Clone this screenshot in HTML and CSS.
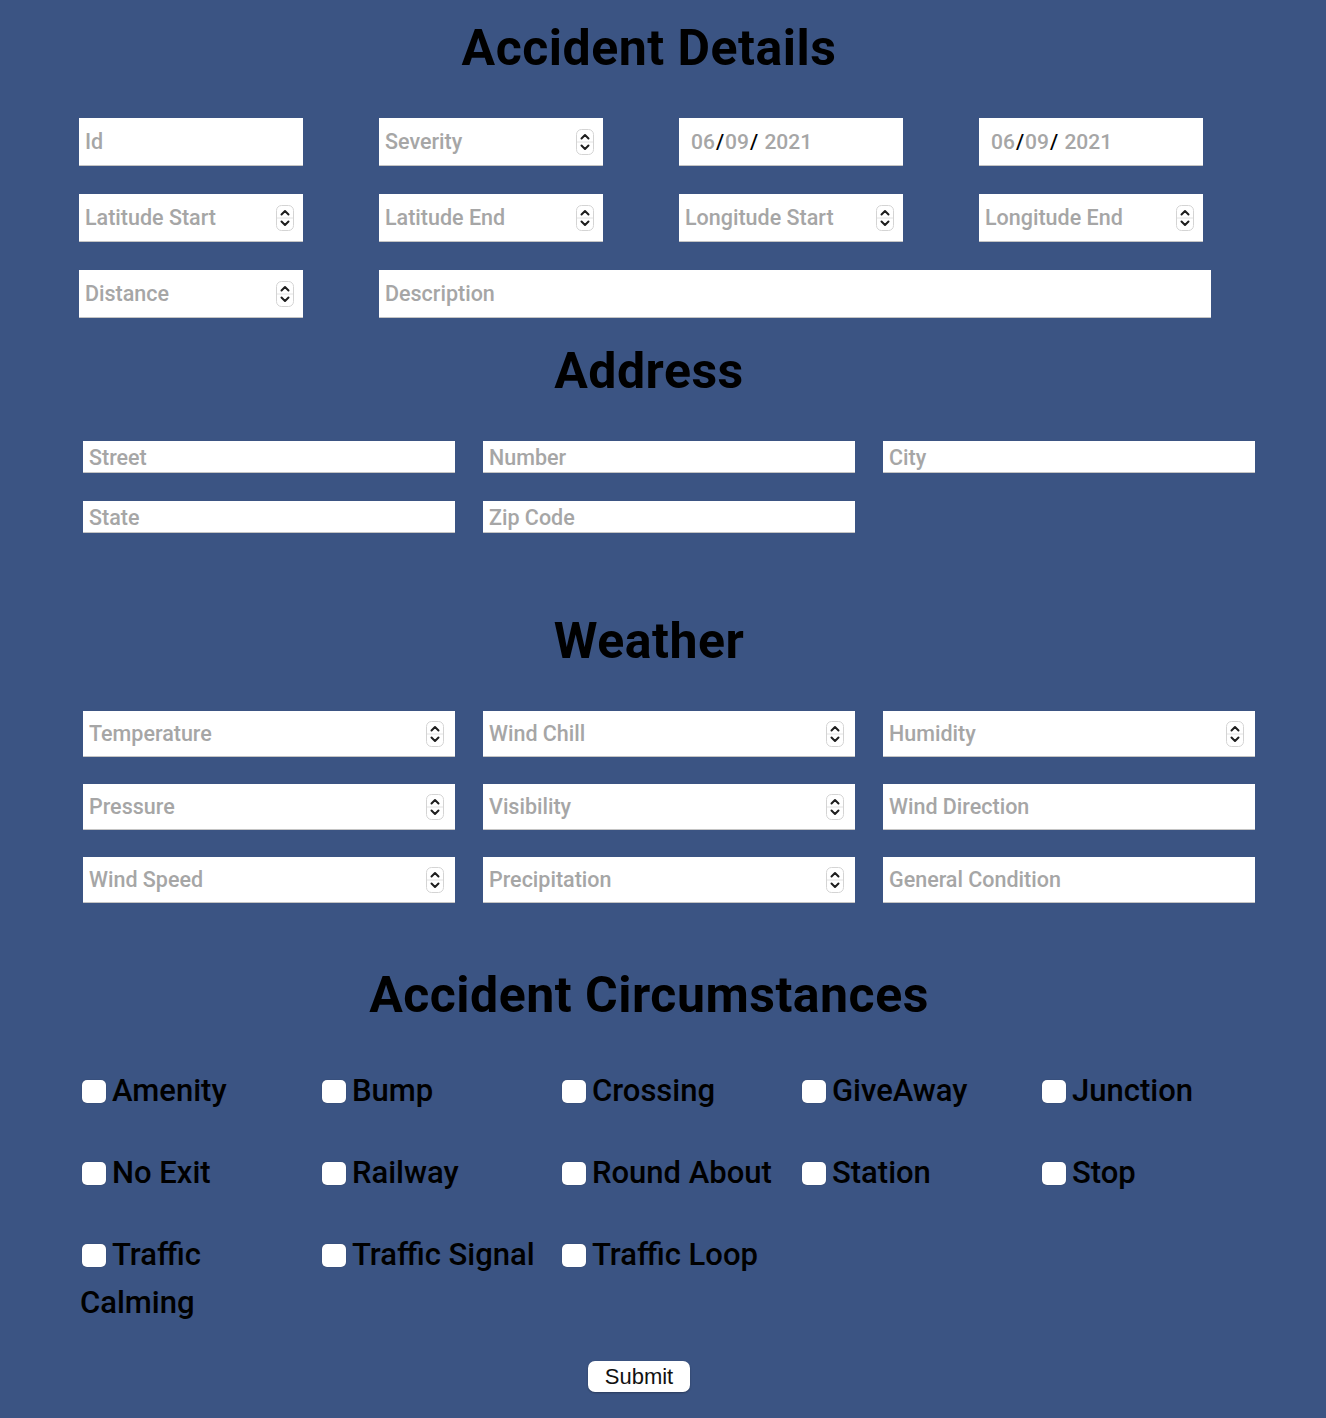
FILE: index.html
```html
<!DOCTYPE html>
<html lang="en">
<head>
    <meta charset="UTF-8">
    <meta name="viewport" content="width=device-width, initial-scale=1.0">
    <title>Accident Form</title>
    <link rel="stylesheet" href="styles.css">
</head>
<body>
    <svg class="defs" width="0" height="0">
        <symbol id="spin" viewBox="0 0 18 26">
            <rect x="0.5" y="0.5" width="17" height="25" rx="5" fill="#fff" stroke="#d4d4d4"/>
            <line x1="1" y1="13" x2="17" y2="13" stroke="#e2e2e2"/>
            <path d="M5.5 9.5 L9 6 L12.5 9.5" fill="none" stroke="#1e1e1e" stroke-width="2" stroke-linecap="round" stroke-linejoin="round"/>
            <path d="M5.5 16.5 L9 20 L12.5 16.5" fill="none" stroke="#1e1e1e" stroke-width="2" stroke-linecap="round" stroke-linejoin="round"/>
        </symbol>
    </svg>

    <form class="form">
        <h1 class="title">Accident Details</h1>
        <div class="details">
            <div class="field"><input type="text" placeholder="Id"></div>
            <div class="field"><input type="number" placeholder="Severity"><svg class="spin"><use href="#spin"/></svg></div>
            <div class="field date"><span>06</span><b>/</b><span>09</span><b>/</b><span>&nbsp;2021</span></div>
            <div class="field date"><span>06</span><b>/</b><span>09</span><b>/</b><span>&nbsp;2021</span></div>
            <div class="field"><input type="number" placeholder="Latitude Start"><svg class="spin"><use href="#spin"/></svg></div>
            <div class="field"><input type="number" placeholder="Latitude End"><svg class="spin"><use href="#spin"/></svg></div>
            <div class="field"><input type="number" placeholder="Longitude Start"><svg class="spin"><use href="#spin"/></svg></div>
            <div class="field"><input type="number" placeholder="Longitude End"><svg class="spin"><use href="#spin"/></svg></div>
            <div class="field"><input type="number" placeholder="Distance"><svg class="spin"><use href="#spin"/></svg></div>
            <div class="field description"><input type="text" placeholder="Description"></div>
        </div>

        <h1 class="title">Address</h1>
        <div class="address">
            <div class="field"><input type="text" placeholder="Street"></div>
            <div class="field"><input type="text" placeholder="Number"></div>
            <div class="field"><input type="text" placeholder="City"></div>
            <div class="field"><input type="text" placeholder="State"></div>
            <div class="field"><input type="text" placeholder="Zip Code"></div>
        </div>

        <h1 class="title">Weather</h1>
        <div class="weather">
            <div class="field"><input type="number" placeholder="Temperature"><svg class="spin"><use href="#spin"/></svg></div>
            <div class="field"><input type="number" placeholder="Wind Chill"><svg class="spin"><use href="#spin"/></svg></div>
            <div class="field"><input type="number" placeholder="Humidity"><svg class="spin"><use href="#spin"/></svg></div>
            <div class="field"><input type="number" placeholder="Pressure"><svg class="spin"><use href="#spin"/></svg></div>
            <div class="field"><input type="number" placeholder="Visibility"><svg class="spin"><use href="#spin"/></svg></div>
            <div class="field"><input type="text" placeholder="Wind Direction"></div>
            <div class="field"><input type="number" placeholder="Wind Speed"><svg class="spin"><use href="#spin"/></svg></div>
            <div class="field"><input type="number" placeholder="Precipitation"><svg class="spin"><use href="#spin"/></svg></div>
            <div class="field"><input type="text" placeholder="General Condition"></div>
        </div>

        <h1 class="title">Accident Circumstances</h1>
        <div class="checks">
            <label><input type="checkbox">Amenity</label>
            <label><input type="checkbox">Bump</label>
            <label><input type="checkbox">Crossing</label>
            <label><input type="checkbox">GiveAway</label>
            <label><input type="checkbox">Junction</label>
            <label><input type="checkbox">No Exit</label>
            <label><input type="checkbox">Railway</label>
            <label><input type="checkbox">Round About</label>
            <label><input type="checkbox">Station</label>
            <label><input type="checkbox">Stop</label>
            <label><input type="checkbox">Traffic Calming</label>
            <label><input type="checkbox">Traffic Signal</label>
            <label><input type="checkbox">Traffic Loop</label>
        </div>

        <div class="actions">
            <button type="submit">Submit</button>
        </div>
    </form>
</body>
</html>
```

FILE: styles.css
```css
body {
    margin: 0;
    background-color: #3b5483;
    font-family: Roboto, "Liberation Sans", sans-serif;
}
.defs {
    position: absolute;
}
.form {
    width: 1298px;
    padding-top: 20px;
    padding-bottom: 26px;
}
.title {
    margin: 0;
    font-size: 50px;
    line-height: 56px;
    font-weight: 700;
    letter-spacing: 0.5px;
    text-align: center;
    color: #000;
}
.field {
    display: flex;
    align-items: center;
    box-sizing: border-box;
    background-color: white;
    border-bottom: 1px solid #c4c4c4;
    padding: 0 9px 0 6px;
}
.field input {
    flex: 1;
    min-width: 0;
    border: none;
    outline: none;
    background: transparent;
    padding: 0;
    font-family: Roboto, "Liberation Sans", sans-serif;
    font-size: 21.5px;
    font-weight: 500;
    color: #333;
}
.field input::placeholder {
    color: #a6a6a6;
}
.field input::-webkit-inner-spin-button,
.field input::-webkit-outer-spin-button {
    -webkit-appearance: none;
    margin: 0;
}
.spin {
    flex: none;
    width: 18px;
    height: 26px;
}
.date {
    padding-left: 12px;
    font-size: 21px;
    font-weight: 500;
    color: #a6a6a6;
}
.date b {
    color: #000;
    font-weight: 500;
    margin: 0 1px;
}
.details {
    display: grid;
    grid-template-columns: repeat(4, 224px);
    grid-auto-rows: 48px;
    gap: 28px 76px;
    margin: 42px 0 25px 79px;
}
.description {
    grid-column: 2 / 5;
    width: 832px;
}
.address {
    display: grid;
    grid-template-columns: repeat(3, 372px);
    grid-auto-rows: 32px;
    gap: 28px 28px;
    margin: 42px 0 80px 83px;
}
.address .field input {
    padding-top: 2px;
}
.weather {
    display: grid;
    grid-template-columns: repeat(3, 372px);
    grid-auto-rows: 46px;
    gap: 27px 28px;
    margin: 42px 0 64px 83px;
}
.weather .field {
    padding-right: 11px;
}
.checks {
    display: grid;
    grid-template-columns: repeat(5, 240px);
    align-items: start;
    row-gap: 34px;
    margin: 44px 0 34px 80px;
    font-size: 31px;
    line-height: 48px;
    font-weight: 500;
    color: #000;
}
.checks label {
    padding-right: 10px;
}
.checks input {
    -webkit-appearance: none;
    appearance: none;
    width: 24px;
    height: 23px;
    margin: 0 6px 0 2px;
    vertical-align: -2px;
    background-color: white;
    border-radius: 5px;
    box-shadow: 0 0 1px rgba(0, 0, 0, 0.4);
}
.actions {
    display: flex;
    justify-content: center;
    padding-right: 20px;
}
button {
    width: 102px;
    height: 31px;
    border: none;
    border-radius: 7px;
    background-color: white;
    box-shadow: 0 1px 2px rgba(0, 0, 0, 0.3);
    font-family: "Liberation Sans", Arial, sans-serif;
    font-size: 22px;
    color: #111;
    cursor: pointer;
}
```
